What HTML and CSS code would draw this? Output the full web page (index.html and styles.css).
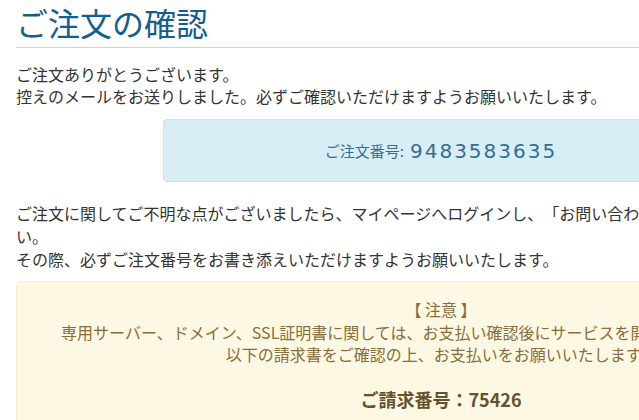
FILE: index.html
```html
<!DOCTYPE html>
<html lang="ja">
<head>
<meta charset="utf-8">
<title>ご注文の確認</title>
<link rel="stylesheet" href="styles.css">
</head>
<body>
<div class="page">
  <h1 class="title">ご注文の確認</h1>
  <hr class="rule">
  <p class="text">ご注文ありがとうございます。<br>控えのメールをお送りしました。必ずご確認いただけますようお願いいたします。</p>
  <div class="order-box">
    <span class="order-label">ご注文番号:</span><span class="order-number">9483583635</span>
  </div>
  <p class="text text-b">ご注文に関してご不明な点がございましたら、マイページへログインし、「お問い合わせ」よりお問い合わせください。<br>その際、必ずご注文番号をお書き添えいただけますようお願いいたします。</p>
  <div class="notice">
    <p class="notice-text">【 注意 】<br>専用サーバー、ドメイン、SSL証明書に関しては、お支払い確認後にサービスを開始させていただきます。<br>以下の請求書をご確認の上、お支払いをお願いいたします。</p>
    <p class="invoice">ご請求番号：75426</p>
  </div>
</div>
</body>
</html>
```
FILE: styles.css
```css
html, body {
  margin: 0;
  padding: 0;
  overflow: hidden;
  background: #fff;
}
body {
  font-family: "Noto Sans CJK JP", "Noto Sans", sans-serif;
  color: #333;
  font-size: 16px;
  text-spacing-trim: space-all;
}
.page {
  width: 850px;
  margin-left: 16px;
}
.title {
  margin: 0;
  padding-top: 3px;
  font-size: 32px;
  line-height: 38px;
  font-weight: 400;
  color: #135e8e;
}
.rule {
  margin: 6px 0 0;
  border: 0;
  border-top: 1px solid #d0d0d0;
}
.text {
  margin: 15px 0 0;
  line-height: 22px;
}
.order-box {
  width: 554px;
  height: 61px;
  margin: 12px auto 0;
  background: #d9edf7;
  border: 1px solid #bce8f1;
  border-radius: 4px;
  color: #31708f;
  display: flex;
  align-items: center;
  justify-content: center;
}
.order-label {
  font-size: 15px;
}
.order-number {
  font-family: "DejaVu Sans", sans-serif;
  font-size: 20px;
  letter-spacing: 2px;
  margin-left: 6px;
}
.text-b {
  margin-top: 20px;
  line-height: 23px;
}
.notice {
  margin-top: 10px;
  background: #fcf8e3;
  border: 1px solid #faebcc;
  border-radius: 4px;
  color: #8a6d3b;
  text-align: center;
  padding: 16px 0 20px;
}
.notice-text {
  margin: 0;
  line-height: 22.5px;
}
.invoice {
  margin: 22px 0 0;
  font-size: 18px;
  font-weight: 700;
  line-height: 23px;
  color: #66512c;
}
```
